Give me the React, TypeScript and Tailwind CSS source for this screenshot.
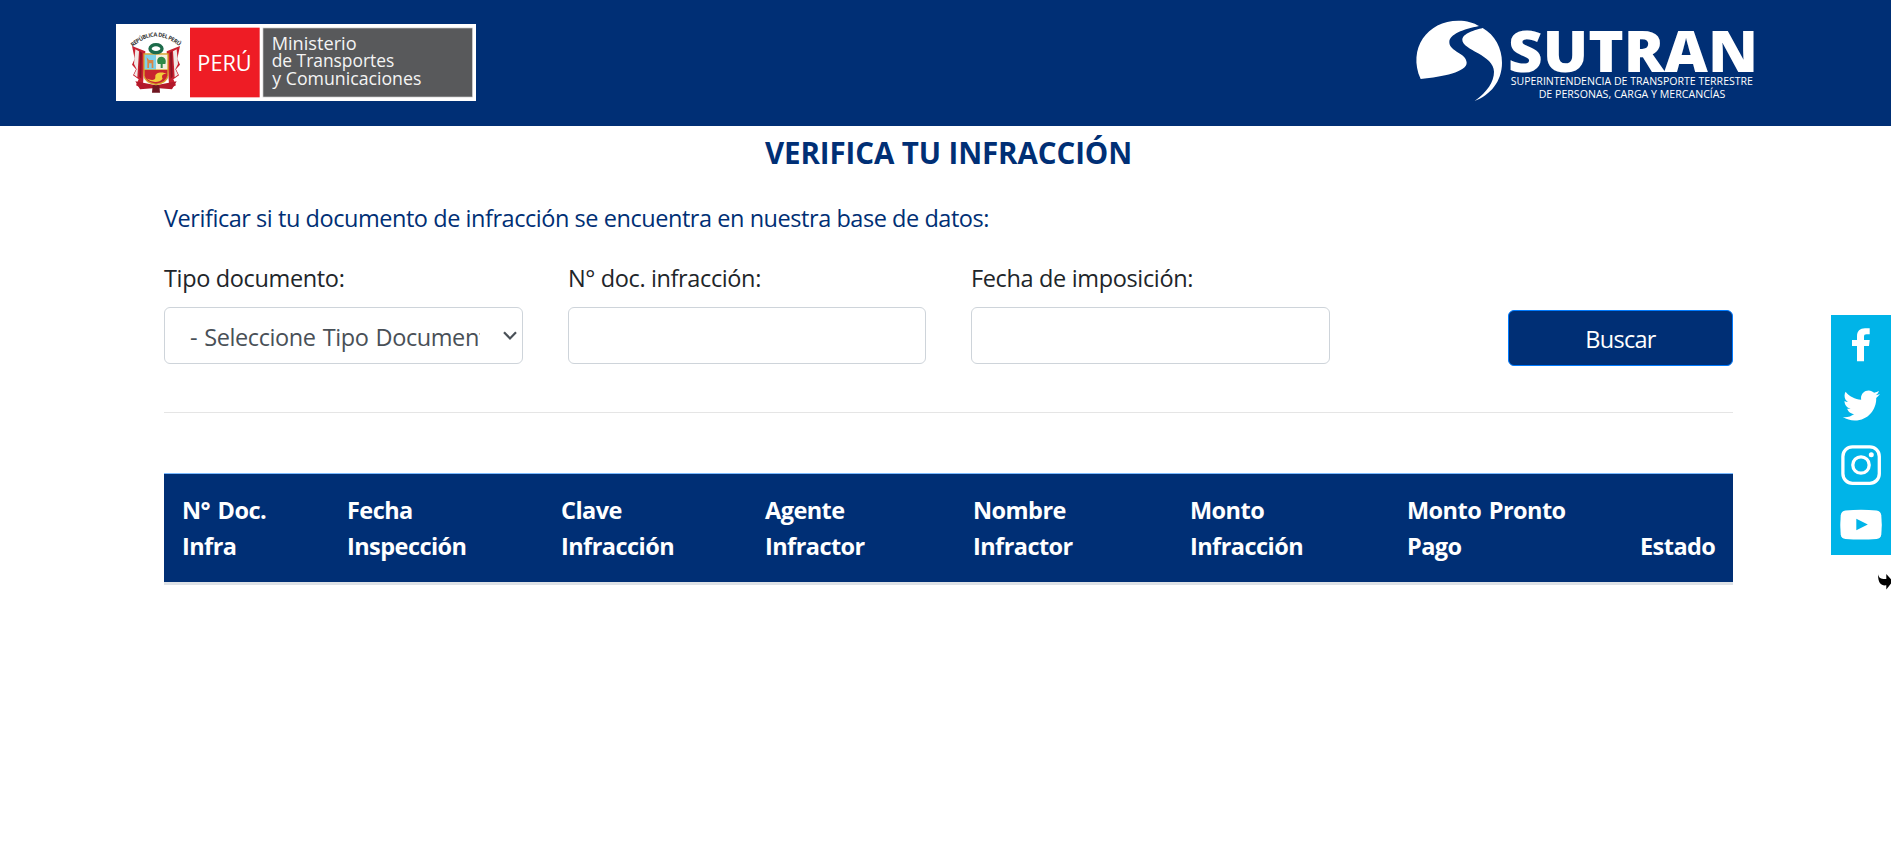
import { FaTwitter } from "react-icons/fa";

const columns = [
  { lines: ["N° Doc.", "Infra"], width: "w-[165px]" },
  { lines: ["Fecha", "Inspección"], width: "w-[214px]" },
  { lines: ["Clave", "Infracción"], width: "w-[204px]" },
  { lines: ["Agente", "Infractor"], width: "w-[208px]" },
  { lines: ["Nombre", "Infractor"], width: "w-[217px]" },
  { lines: ["Monto", "Infracción"], width: "w-[217px]" },
  { lines: ["Monto Pronto", "Pago"], width: "w-[233px]" },
  { lines: ["Estado"], width: "w-[111px]" },
];

function MinistryLogo() {
  return (
    <svg viewBox="48 42 1080 231" className="h-[77px] w-[360px]" fontFamily="'Open Sans', sans-serif" fill="#fff">
      <rect x="48" y="42" width="1080" height="231" />
      <path id="crest-arc" d="M98 111Q168 48 240 111" fill="none" />
      <text fontSize="17" fontWeight="700" fill="#333">
        <textPath href="#crest-arc" textLength="155">REPÚBLICA DEL PERÚ</textPath>
      </text>
      <path d="M96 108L136 124L128 236L108 226L116 208L99 196L108 178L96 164L104 146Z" fill="#c8202f" />
      <path d="M240 108L200 124L208 236L228 226L220 208L237 196L228 178L240 164L232 146Z" fill="#c8202f" />
      <path d="M106 118L117 124L112 202L102 194L110 178L102 162ZM230 118L219 124L224 202L234 194L226 178L234 162Z" fill="#f1e9e6" />
      <path d="M120 124L126 128L124 206L118 200ZM216 124L210 128L212 206L218 200Z" fill="#8e1424" />
      <path d="M106 214L168 226L230 214L216 238L168 234L120 238Z" fill="#b3182a" />
      <path d="M158 226H178L180 248H156Z" fill="#6f1520" />
      <path d="M130 130H206V196Q204 220 168 226Q132 220 130 196Z" fill="#d9a52c" />
      <path d="M134 134H168V178H134Z" fill="#7fd0e8" />
      <path d="M168 134H202V178H168Z" fill="#f4efdf" />
      <path d="M134 180H202V196Q200 216 168 221Q136 216 134 196Z" fill="#c9252f" />
      <path d="M140 142L147 150H160V174H155V160H147V174H142V154Z" fill="#d98543" />
      <path d="M184 140C196 140 200 152 196 162H188V174H182V162H174C168 150 174 140 184 140Z" fill="#2f8a47" />
      <path d="M140 205C152 212 168 212 166 200C164 186 190 184 200 192C186 190 184 198 188 206C178 220 150 218 140 205Z" fill="#f2cf3b" />
      <ellipse cx="168" cy="116" rx="18" ry="12" fill="none" stroke="#1c6b4a" strokeWidth="10" />
      <rect x="270" y="53" width="209" height="209" fill="#ee1c25" />
      <text x="292" y="183" fontSize="66" fontWeight="500" textLength="163" lengthAdjust="spacingAndGlyphs">PERÚ</text>
      <rect x="489" y="54" width="628" height="207" fill="#58595b" stroke="#c9c9c9" strokeWidth="2" />
      <g fontSize="54" fontWeight="500" fill="#f4f4f4">
        <text x="515" y="121" textLength="255" lengthAdjust="spacingAndGlyphs">Ministerio</text>
        <text x="515" y="172" textLength="368" lengthAdjust="spacingAndGlyphs">de Transportes</text>
        <text x="517" y="224" textLength="447" lengthAdjust="spacingAndGlyphs">y Comunicaciones</text>
      </g>
    </svg>
  );
}

function SutranLogo() {
  return (
    <svg viewBox="45 27 1020 252" className="h-[84px] w-[340px] overflow-visible" fontFamily="'Open Sans', sans-serif" fill="#fff">
      <path d="M62 207C22 116 82 32 175 32C200 32 222 38 237 48C190 58 148 72 148 97C148 125 200 130 200 158C200 185 130 200 62 207Z" />
      <path d="M248 54C285 75 306 115 306 158C306 215 270 255 224 273C262 245 282 215 282 185C282 135 187 120 187 90C187 70 225 60 248 54Z" />
      <text x="324" y="187" fontSize="169" fontWeight="800" textLength="750" lengthAdjust="spacingAndGlyphs">SUTRAN</text>
      <g fontSize="33" fontWeight="500">
        <text x="332" y="225" textLength="727" lengthAdjust="spacingAndGlyphs">SUPERINTENDENCIA DE TRANSPORTE TERRESTRE</text>
        <text x="416" y="264" textLength="560" lengthAdjust="spacingAndGlyphs">DE PERSONAS, CARGA Y MERCANCÍAS</text>
      </g>
    </svg>
  );
}

function SocialBar() {
  return (
    <aside className="absolute top-[315px] right-0 flex w-[60px] flex-col">
      <div className="flex flex-col bg-[#00b4e8] text-white">
        <a className="size-[60px]">
          <svg viewBox="0 0 60 60" fill="currentColor">
            <path d="M26 46.3V31H21V25H26V21.5C26 16 29 13.3 34 13.3H38.7V19.2H35.5C33.6 19.2 33 20 33 21.7V25H38.7L38 31H33V46.3Z" />
          </svg>
        </a>
        <a className="flex size-[60px] items-center justify-center">
          <FaTwitter className="size-[37px]" />
        </a>
        <a className="size-[60px]">
          <svg viewBox="0 0 60 60" fill="none" stroke="currentColor">
            <rect x="11.9" y="11.9" width="36.4" height="36.4" rx="9.5" strokeWidth="3.3" />
            <circle cx="30" cy="30" r="8.2" strokeWidth="3.3" />
            <circle cx="40.3" cy="19.8" r="2.5" fill="currentColor" stroke="none" />
          </svg>
        </a>
        <a className="size-[60px]">
          <svg viewBox="0 0 60 60">
            <path d="M14.5 15.4Q30 14.2 45.5 15.4Q49.8 15.8 50.3 20.5Q51.3 30 50.3 39.5Q49.8 43.6 45.5 44Q30 45.2 14.5 44Q10.2 43.6 9.7 39.5Q8.8 30 9.7 20.5Q10.2 15.8 14.5 15.4Z" fill="currentColor" />
            <path d="M25.3 23.7L36.8 29.6L25.3 35.3Z" fill="#00b4e8" />
          </svg>
        </a>
      </div>
      <svg viewBox="0 0 13 16" className="mt-[19px] h-[16px] w-[13px] self-end">
        <path d="M0 0.3C1 4.5 3.5 5.3 8.3 5V0L13 5.2V9.6L8.3 15.4V11.3C3.5 12 0 9.5 0 0.3Z" fill="#000" />
      </svg>
    </aside>
  );
}

const field = "h-[57px] w-full rounded-[6px] border border-[#ced4da] bg-white";

export default function App() {
  return (
    <div className="relative min-h-[841px] overflow-hidden bg-white font-['Open_Sans',sans-serif] text-[23.5px] leading-[36px] text-[#212529]">
      <header className="flex h-[126px] items-start justify-between bg-[#002f75] pr-[136px] pl-[116px]">
        <div className="pt-[24px]"><MinistryLogo /></div>
        <div className="pt-[19px]"><SutranLogo /></div>
      </header>

      <main className="mx-[164px] w-[1569px]">
        <h1 className="pt-[9px] text-center text-[29.5px] leading-[36px] font-bold tracking-[-0.1px] text-[#002f75]">VERIFICA TU INFRACCIÓN</h1>
        <p className="mt-[29px] tracking-[-0.45px] text-[#002f75]">
          Verificar si tu documento de infracción se encuentra en nuestra base de datos:
        </p>

        <form className="mt-[24px] flex items-end">
          <div className="w-[359px]">
            <label className="block h-[47px] tracking-[-0.35px]">Tipo documento:</label>
            <div className={`${field} flex items-center justify-between pr-[5px] pl-[25px] text-[#495057]`}>
              <span className="w-[290px] overflow-hidden pt-[2px] tracking-[-0.42px] [word-spacing:1.5px] whitespace-nowrap">- Seleccione Tipo Documento -</span>
              <svg viewBox="0 0 14 10" className="h-[10px] w-[14px]" fill="none" stroke="#495057" strokeWidth="2.2">
                <path d="M1 1.2L7 7.4L13 1.2" />
              </svg>
            </div>
          </div>
          <div className="ml-[45px] w-[358px]">
            <label className="block h-[47px] tracking-[-0.37px]">N° doc. infracción:</label>
            <input className={field} />
          </div>
          <div className="ml-[45px] w-[359px]">
            <label className="block h-[47px] tracking-[-0.35px]">Fecha de imposición:</label>
            <input className={field} />
          </div>
          <button type="button" className="mb-[-2px] ml-auto h-[56px] w-[225px] rounded-[6px] border border-[#007bff] bg-[#002f75] pt-[2px] tracking-[-0.7px] text-white">
            Buscar
          </button>
        </form>

        <hr className="mt-[48px] border-[#e5e5e5]" />

        <table className="mt-[60px] w-[1569px] table-fixed border-separate border-spacing-0 text-left text-white">
          <thead>
            <tr>
              {columns.map((c) => (
                <th key={c.lines.join(" ")} className={`${c.width} h-[112px] border-t border-b-3 border-t-[#7abaff] border-b-[#dee2e6] bg-[#002f75] px-[18px] pb-[18px] align-bottom font-bold tracking-[-0.55px] [word-spacing:2px] whitespace-nowrap`}>
                  {c.lines.map((l) => (
                    <div key={l}>{l}</div>
                  ))}
                </th>
              ))}
            </tr>
          </thead>
        </table>
      </main>
      <SocialBar />
    </div>
  );
}
